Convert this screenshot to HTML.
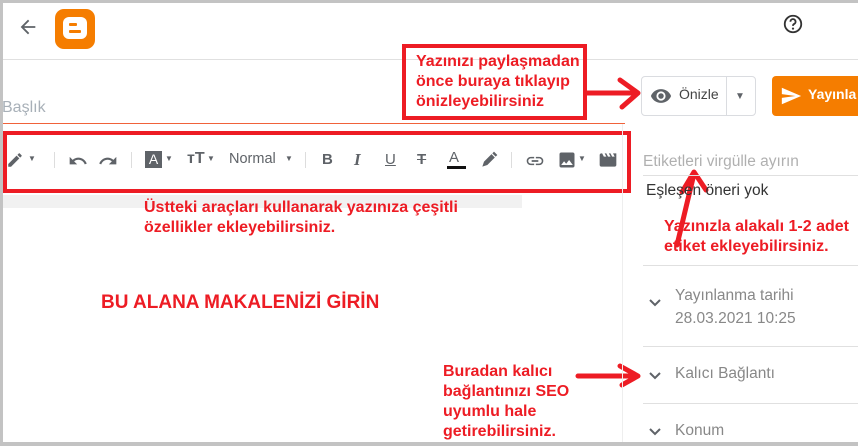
<!DOCTYPE html>
<html><head><meta charset="utf-8"><style>
*{margin:0;padding:0;box-sizing:border-box}
body{width:858px;height:446px;overflow:hidden;background:#fff;position:relative;font-family:"Liberation Sans",Arial,sans-serif}
.a{position:absolute}
.red{color:#ed1c24;font-weight:bold;font-size:16px;line-height:20px}
.g{color:#5f6368}
.sep{position:absolute;background:#e0e0e0}
</style></head><body>
<div class="a" style="left:0;top:0;width:858px;height:3px;background:#c3c3c3"></div>
<div class="a" style="left:0;top:0;width:3px;height:446px;background:#c3c3c3"></div>
<div class="a" style="left:0;top:442px;width:858px;height:4px;background:#c3c3c3"></div>
<!-- header -->
<svg class="a" style="left:17px;top:16px" width="22" height="22" viewBox="0 0 24 24"><path d="M20 11H7.8l5.6-5.6L12 4l-8 8 8 8 1.4-1.4L7.8 13H20z" fill="#5f6368"/></svg>
<div class="a" style="left:55px;top:9px;width:40px;height:40px;background:#f57d00;border-radius:9px"></div>
<div class="a" style="left:63px;top:17px;width:24px;height:22px;background:#fff;border-radius:6px"></div>
<div class="a" style="left:69px;top:23px;width:8px;height:3px;background:#f57d00;border-radius:1px"></div>
<div class="a" style="left:69px;top:30px;width:12px;height:3px;background:#f57d00;border-radius:1px"></div>
<svg class="a" style="left:782px;top:13px" width="22" height="22" viewBox="0 0 24 24"><circle cx="12" cy="12" r="9" fill="none" stroke="#333" stroke-width="2"/><path d="M9.2 9.5a2.8 2.8 0 1 1 4 2.5c-.8.4-1.2 1-1.2 2" fill="none" stroke="#333" stroke-width="2"/><circle cx="12" cy="17" r="1.2" fill="#333"/></svg>
<div class="sep" style="left:3px;top:59px;width:855px;height:1px"></div>
<!-- title -->
<div class="a" style="left:2px;top:99px;font-size:16px;color:#a8b0b8">Başlık</div>
<div class="a" style="left:3px;top:123px;width:622px;height:1px;background:#f0623a"></div>
<!-- toolbar -->
<div class="a" style="left:3px;top:195px;width:519px;height:13px;background:#f1f1f1"></div>
<div class="a" style="left:3px;top:131px;width:628px;height:62px;border:4px solid #ed1c24"></div>
<div class="a g" style="left:4px;top:149px;width:626px;height:22px;font-size:14px">
 <svg class="a" style="left:2px;top:2px" width="18" height="18" viewBox="0 0 24 24"><path d="M3 17.3V21h3.7L17.8 9.9l-3.7-3.7zM20.7 7c.4-.4.4-1 0-1.4l-2.3-2.3c-.4-.4-1-.4-1.4 0l-1.8 1.8 3.7 3.7z" fill="#5f6368"/></svg>
 <span class="a" style="left:24px;top:5px;font-size:8px">▼</span>
 <div class="a" style="left:50px;top:3px;width:1px;height:16px;background:#ddd"></div>
 <svg class="a" style="left:64px;top:2px" width="20" height="20" viewBox="0 0 24 24"><path d="M12.5 8c-2.6 0-5 1-6.9 2.6L2 7v9h9l-3.6-3.6c1.4-1.2 3.2-1.9 5.1-1.9 3.5 0 6.5 2.3 7.6 5.5l2.4-.8C21.1 11 17.1 8 12.5 8z" fill="#5f6368"/></svg>
 <svg class="a" style="left:94px;top:2px" width="20" height="20" viewBox="0 0 24 24"><path d="M18.4 10.6C16.5 9 14.1 8 11.5 8c-4.6 0-8.6 3-10 7.2l2.4.8c1.1-3.2 4.1-5.5 7.6-5.5 1.9 0 3.7.7 5.1 1.9L13 16h9V7z" fill="#5f6368"/></svg>
 <div class="a" style="left:127px;top:3px;width:1px;height:16px;background:#ddd"></div>
 <div class="a" style="left:141px;top:2px;width:17px;height:17px;background:#5f6368;color:#fff;font-size:14px;text-align:center;line-height:17px">A</div>
 <span class="a" style="left:161px;top:5px;font-size:8px">▼</span>
 <span class="a" style="left:183px;top:1px;font-weight:bold;font-size:16px">тT</span><span class="a" style="left:203px;top:5px;font-size:8px">▼</span>
 <span class="a" style="left:225px;top:2px;font-size:14.5px">Normal</span><span class="a" style="left:281px;top:5px;font-size:8px">▼</span>
 <div class="a" style="left:301px;top:3px;width:1px;height:16px;background:#ddd"></div>
 <span class="a" style="left:318px;top:2px;font-weight:bold;font-size:15px">B</span>
 <span class="a" style="left:350px;top:1px;font-weight:bold;font-style:italic;font-family:'Liberation Serif',serif;font-size:17px">I</span>
 <span class="a" style="left:381px;top:2px;text-decoration:underline;font-size:15px">U</span>
 <span class="a" style="left:413px;top:2px;text-decoration:line-through;font-weight:bold;font-size:15px">T</span>
 <span class="a" style="left:445px;top:0px;font-size:15px">A</span><div class="a" style="left:443px;top:17px;width:19px;height:3px;background:#111"></div>
 <svg class="a" style="left:475px;top:1px" width="20" height="20" viewBox="0 0 24 24"><path d="M4 20l2-6 9-9 4 4-9 9zM16 4l2-2 4 4-2 2z" fill="#5f6368"/></svg>
 <div class="a" style="left:507px;top:3px;width:1px;height:16px;background:#ddd"></div>
 <svg class="a" style="left:521px;top:2px" width="20" height="20" viewBox="0 0 24 24"><path d="M3.9 12c0-1.7 1.4-3.1 3.1-3.1h4V7H7a5 5 0 0 0 0 10h4v-1.9H7c-1.7 0-3.1-1.4-3.1-3.1zM8 13h8v-2H8zm9-6h-4v1.9h4c1.7 0 3.1 1.4 3.1 3.1s-1.4 3.1-3.1 3.1h-4V17h4a5 5 0 0 0 0-10z" fill="#5f6368"/></svg>
 <svg class="a" style="left:553px;top:1px" width="20" height="20" viewBox="0 0 24 24"><path d="M21 19V5c0-1.1-.9-2-2-2H5c-1.1 0-2 .9-2 2v14c0 1.1.9 2 2 2h14c1.1 0 2-.9 2-2zM8.5 13.5l2.5 3 3.5-4.5 4.5 6H5z" fill="#5f6368"/></svg><span class="a" style="left:574px;top:5px;font-size:8px">▼</span>
 <svg class="a" style="left:594px;top:1px" width="20" height="20" viewBox="0 0 24 24"><path d="M18 4l2 4h-3l-2-4h-2l2 4h-3l-2-4H8l2 4H7L5 4H4c-1.1 0-2 .9-2 2v12c0 1.1.9 2 2 2h16c1.1 0 2-.9 2-2V4z" fill="#5f6368"/></svg>
</div>
<div class="a red" style="left:144px;top:198px">Üstteki araçları kullanarak yazınıza çeşitli<br>özellikler ekleyebilirsiniz.</div>
<div class="a" style="left:101px;top:292px;color:#ed1c24;font-weight:bold;font-size:19px">BU ALANA MAKALENİZİ GİRİN</div>
<!-- annotation box top -->
<div class="a" style="left:402px;top:44px;width:185px;height:76px;border:4px solid #ed1c24"></div>
<div class="a red" style="left:416px;top:52px">Yazınızı paylaşmadan<br>önce buraya tıklayıp<br>önizleyebilirsiniz</div>
<svg class="a" style="left:0;top:0" width="858" height="446">
<g stroke="#ed1c24" stroke-width="5" fill="none" stroke-linecap="round" stroke-linejoin="round">
<path d="M587 93H636M620 80L638 93L622 107"/>
<path d="M693 178L677 245"/>
<path d="M682 192L694 172L706 190"/>
<path d="M578 376H636M620 366L638 376L622 385"/>
</g></svg>
<!-- right panel -->
<div class="sep" style="left:622px;top:124px;width:1px;height:318px;background:#eee"></div>
<div class="a" style="left:641px;top:76px;width:115px;height:40px;border:1px solid #dadce0;border-radius:4px"></div>
<div class="a" style="left:726px;top:77px;width:1px;height:38px;background:#dadce0"></div>
<svg class="a" style="left:650px;top:85px" width="22" height="22" viewBox="0 0 24 24"><path d="M12 4.5C7 4.5 2.7 7.6 1 12c1.7 4.4 6 7.5 11 7.5s9.3-3.1 11-7.5c-1.7-4.4-6-7.5-11-7.5zM12 17a5 5 0 1 1 0-10 5 5 0 0 1 0 10zm0-8a3 3 0 1 0 0 6 3 3 0 0 0 0-6z" fill="#5f6368"/></svg>
<div class="a" style="left:679px;top:86px;font-size:14px;color:#444">Önizle</div>
<span class="a g" style="left:735px;top:91px;font-size:10px">▼</span>
<div class="a" style="left:772px;top:76px;width:90px;height:40px;background:#f57d00;border-radius:4px"></div>
<svg class="a" style="left:780px;top:85px" width="22" height="22" viewBox="0 0 24 24"><path d="M2 21l21-9L2 3v7l15 2-15 2z" fill="#fff"/></svg>
<div class="a" style="left:808px;top:86px;font-size:14px;color:#fff;font-weight:bold">Yayınla</div>
<div class="a" style="left:643px;top:153px;font-size:15.5px;color:#b0b0b0">Etiketleri virgülle ayırın</div>
<div class="sep" style="left:643px;top:175px;width:215px;height:1px"></div>
<div class="a" style="left:646px;top:182px;font-size:15.5px;color:#333">Eşleşen öneri yok</div>
<div class="a red" style="left:664px;top:217px">Yazınızla alakalı 1-2 adet<br>etiket ekleyebilirsiniz.</div>
<div class="sep" style="left:643px;top:265px;width:215px;height:1px"></div>
<div class="a" style="left:675px;top:284px;font-size:15.5px;color:#888;line-height:23px">Yayınlanma tarihi<br>28.03.2021 10:25</div>
<div class="sep" style="left:643px;top:346px;width:215px;height:1px"></div>
<div class="a" style="left:675px;top:365px;font-size:15.5px;color:#888">Kalıcı Bağlantı</div>
<div class="sep" style="left:643px;top:403px;width:215px;height:1px"></div>
<div class="a" style="left:675px;top:422px;font-size:15.5px;color:#888">Konum</div>
<svg class="a" style="left:648px;top:298px" width="14" height="10" viewBox="0 0 14 10"><path d="M2 2l5 5 5-5" stroke="#5f6368" stroke-width="2" fill="none"/></svg>
<svg class="a" style="left:648px;top:371px" width="14" height="10" viewBox="0 0 14 10"><path d="M2 2l5 5 5-5" stroke="#5f6368" stroke-width="2" fill="none"/></svg>
<svg class="a" style="left:648px;top:427px" width="14" height="10" viewBox="0 0 14 10"><path d="M2 2l5 5 5-5" stroke="#5f6368" stroke-width="2" fill="none"/></svg>
<div class="a red" style="left:443px;top:362px">Buradan kalıcı<br>bağlantınızı SEO<br>uyumlu hale<br>getirebilirsiniz.</div>
</body></html>
